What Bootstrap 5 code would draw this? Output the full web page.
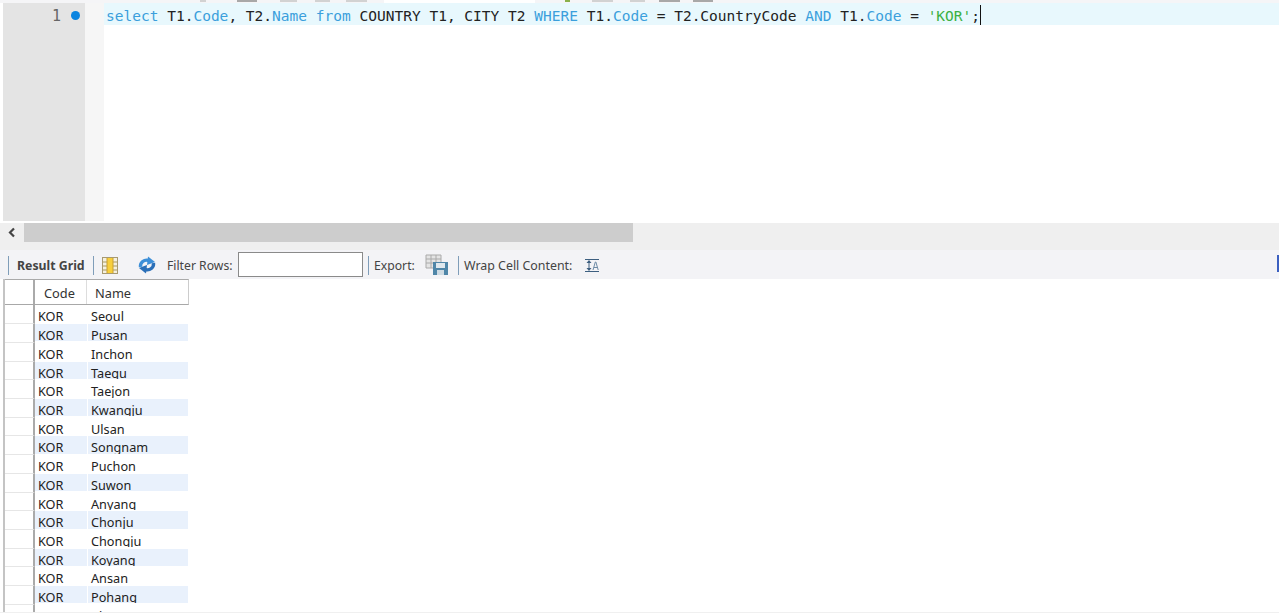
<!DOCTYPE html>
<html lang="en"><head><meta charset="utf-8"><title>Query</title>
<link href="https://cdn.jsdelivr.net/npm/bootstrap@5.3.0/dist/css/bootstrap.min.css" rel="stylesheet">
<style>
html,body{height:614px;overflow:hidden;background:#fff}
.wb-page{width:1279px;height:614px;display:flex;flex-direction:column;font-family:"Noto Sans","Open Sans",sans-serif;font-size:12.5px;color:#333}
.wb-top{height:3px;flex:none;background:#f5f5f7;display:flex;align-items:flex-start}
.wb-smudge{height:2px;flex:none;background:#d2d2d2}
.wb-smudge-d{background:#a8a8a8}
.wb-white{height:3px;background:#fff;flex:none}
.wb-green{width:5px;height:2px;background:#8ab04a;flex:none}
.wb-editor{height:218px;flex:none;display:flex;margin-left:3px}
.wb-gutter{width:82px;background:#e4e4e4;flex:none;display:flex;justify-content:flex-end;align-items:flex-start;height:218px;font:15px/26px "DejaVu Sans Mono",monospace;color:#666;padding-right:5px;gap:10px}
.wb-dot{width:9px;height:9px;border-radius:50%;background:#0a84e0;margin-top:8px}
.wb-fold{width:19px;flex:none;background:#f6f6f6}
.wb-code{flex:1;height:22px;background:#e8f8fd;padding-left:2px;font:14.53px/27px "DejaVu Sans Mono",monospace;color:#222;white-space:nowrap;overflow:visible}
.wb-kw{color:#3b9fdc}.wb-str{color:#3cb043}
.wb-caret{display:inline-block;width:1px;height:20px;background:#111;vertical-align:-4px}
.wb-scroll{height:27px;margin-top:2px;flex:none;background:#efefef;display:flex;align-items:flex-start}
.wb-arrow{width:24px;height:19px;display:flex;align-items:center;justify-content:center}
.wb-thumb{width:609px;height:19px;background:#cdcdcd}
.wb-tools{height:29px;flex:none;background:#f3f3f6;display:flex;align-items:center;font-size:12.2px;color:#444;white-space:nowrap;position:relative}
.wb-tools>*{flex:none}
.wb-sep{width:1px;height:19px;background:#7f9db9;margin-top:2px}
.wb-tb1{margin-left:8px}
.wb-rg{margin-left:8px;font-weight:700;width:69px;font-size:12.3px;padding-top:4px}
.wb-tb2{margin-left:7px}
.wb-ic1{margin-left:8px;margin-top:1px}
.wb-ic2{margin-left:19px}
.wb-lb1{margin-left:10px;width:66px;padding-top:4px}
.wb-filter{width:125px;height:25px;background:#fff;border:1px solid #8a8a8a;margin-left:5px;margin-bottom:1px}
.wb-tb3{margin-left:5px}
.wb-lb2{margin-left:5px;width:42px;padding-top:4px}
.wb-ic3{margin-left:9px;margin-top:1px}
.wb-tb4{margin-left:9px}
.wb-lb3{margin-left:5px;width:109px;padding-top:4px;font-size:12.4px}
.wb-ic4{margin-left:12px;margin-top:2px}
.wb-mark{position:absolute;right:0;top:5px;width:2px;height:17px;background:#3b5fc0}
.wb-grid{margin-left:3px;width:186px;height:333px;flex:none;overflow:hidden;border-left:2px solid #c4c4c4}
.wb-head{display:flex;height:26px;background:#fff;border-top:1px solid #aaa;border-bottom:1px solid #a8a8a8;border-right:1px solid #ccc;line-height:27px;font-size:12.8px}
.wb-h0{width:30px;flex:none;border-right:2px solid #aaa}
.wb-h1{width:52px;flex:none;padding-left:9px;border-right:1px solid #ddd}
.wb-h2{flex:1;padding-left:8px}
.wb-rows{padding-top:.4px}
.wb-line{display:flex;height:18.73px;font-size:12.7px;color:#222}
.wb-c0{width:30px;flex:none;background:#fff;border-right:2px solid #aaa;border-bottom:1px solid #e6e6e6}
.wb-c1,.wb-c2{height:17.3px;overflow:hidden;padding-top:2px;line-height:19px;padding-left:3px}
.wb-c1{width:52px;flex:none;margin-right:1px}
.wb-c2{width:100px;flex:none}
.wb-alt .wb-c1,.wb-alt .wb-c2{background:#e9f1fc}
.wb-end{height:1px;flex:none;background:#f0f0f0}
</style></head><body>
<div class="wb-page">
<div class="wb-top"><span class="wb-smudge" style="width:6px;margin-left:200px"></span><span class="wb-smudge wb-smudge-d" style="width:20px;margin-left:31px"></span><span class="wb-smudge" style="width:17px;margin-left:23px"></span><span class="wb-smudge" style="width:15px;margin-left:18px"></span><span class="wb-smudge" style="width:21px;margin-left:16px"></span><span class="wb-white" style="width:151px;margin-left:17px"></span><span class="wb-green" style="margin-left:30px"></span><span class="wb-smudge" style="width:21px;margin-left:22px"></span><span class="wb-smudge" style="width:15px;margin-left:17px"></span><span class="wb-smudge wb-smudge-d" style="width:21px;margin-left:14px"></span><span class="wb-smudge wb-smudge-d" style="width:20px;margin-left:13px"></span></div>
<div class="wb-editor">
<div class="wb-gutter"><span>1</span><span class="wb-dot"></span></div>
<div class="wb-fold"></div>
<div class="wb-code"><span class="wb-kw">select</span> T1.<span class="wb-kw">Code</span>, T2.<span class="wb-kw">Name</span> <span class="wb-kw">from</span> COUNTRY T1, CITY T2 <span class="wb-kw">WHERE</span> T1.<span class="wb-kw">Code</span> = T2.CountryCode <span class="wb-kw">AND</span> T1.<span class="wb-kw">Code</span> = <span class="wb-str">'KOR'</span>;<span class="wb-caret"></span></div>
</div>
<div class="wb-scroll"><div class="wb-arrow"><svg width="10" height="11" viewBox="0 0 10 11"><path d="M7 1.500 3 5.500l4 4" fill="none" stroke="#444" stroke-width="2.200"/></svg></div><div class="wb-thumb"></div></div>
<div class="wb-tools">
<span class="wb-sep wb-tb1"></span><span class="wb-rg">Result Grid</span><span class="wb-sep wb-tb2"></span>
<svg class="wb-ic1" width="16" height="17" viewBox="0 0 16 17"><rect x=".5" y=".5" width="15" height="16" fill="#f4f0e0" stroke="#a89a70"/><path d="M1 5h14M1 9h14M1 13h14" stroke="#a89860"/><rect x="5" y="1" width="6" height="15" fill="#f8cf3c"/><path d="M5 1v15M11 1v15" stroke="#c9a030"/></svg>
<svg class="wb-ic2" width="20" height="18" viewBox="0 0 20 18"><path d="M3.500 11C3 6.500 7 3 12 4.500" fill="none" stroke="#3d8fd8" stroke-width="3.400"/><path d="M11 .5 18 6l-8 3z" fill="#3d8fd8"/><path d="M16.500 7C17 11.500 13 15 8 13.500" fill="none" stroke="#2a6fb8" stroke-width="3.400"/><path d="M9 17.500 2 12l8-3z" fill="#2a6fb8"/></svg>
<span class="wb-lb1">Filter Rows:</span>
<span class="wb-filter"></span>
<span class="wb-sep wb-tb3"></span><span class="wb-lb2">Export:</span>
<svg class="wb-ic3" width="24" height="22" viewBox="0 0 24 22"><path d="M1 1h15v13H1z" fill="#e4e4e4" stroke="#aaa"/><path d="M1 5h15M1 9h15M6 1v13M11 1v13" stroke="#aaa"/><rect x="8" y="8" width="15" height="13" fill="#4f86a8"/><rect x="11" y="9" width="9" height="5" fill="#dfe8ee"/><rect x="12" y="16" width="7" height="5" fill="#cfdbe3"/></svg>
<span class="wb-sep wb-tb4"></span><span class="wb-lb3">Wrap Cell Content:</span>
<svg class="wb-ic4" width="15" height="15" viewBox="0 0 15 15"><path d="M0 1.500h14M0 13.500h14M4 3v9" stroke="#3d5f80" fill="none"/><path d="M1.500 5 4 2l2.500 3zM1.500 10 4 13l2.500-3z" fill="#3d5f80"/><path d="M8 12l2.300-8h.6l2.300 8M9 9.500h3.200" stroke="#6d8aa5" fill="none"/></svg>
<span class="wb-mark"></span>
</div>
<div class="wb-grid">
<div class="wb-head"><div class="wb-h0"></div><div class="wb-h1">Code</div><div class="wb-h2">Name</div></div>
<div id="rows" class="wb-rows"></div>
</div>
<div class="wb-end"></div>
</div>
<script>
const names=["Seoul","Pusan","Inchon","Taegu","Taejon","Kwangju","Ulsan","Songnam","Puchon","Suwon","Anyang","Chonju","Chongju","Koyang","Ansan","Pohang","Cheonan"];
document.getElementById('rows').innerHTML=names.map((n,i)=>`<div class="wb-line ${i%2?'wb-alt':''}"><div class="wb-c0"></div><div class="wb-c1">KOR</div><div class="wb-c2">${n}</div></div>`).join('');
</script>
<script src="https://cdn.jsdelivr.net/npm/bootstrap@5.3.0/dist/js/bootstrap.bundle.min.js"></script>
</body></html>
